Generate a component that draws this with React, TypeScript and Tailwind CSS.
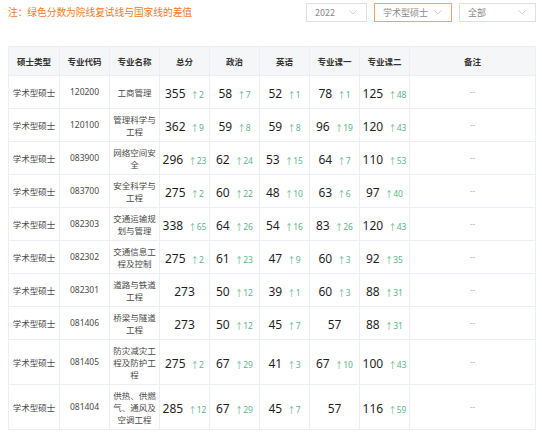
import React from 'react'

type Score = [number, number?]

type Row = {
  code: string
  name: string
  scores: Score[]
}

const ROWS: Row[] = [
  { code: '120200', name: '工商管理', scores: [[355, 2], [58, 7], [52, 1], [78, 1], [125, 48]] },
  { code: '120100', name: '管理科学与工程', scores: [[362, 9], [59, 8], [59, 8], [96, 19], [120, 43]] },
  { code: '083900', name: '网络空间安全', scores: [[296, 23], [62, 24], [53, 15], [64, 7], [110, 53]] },
  { code: '083700', name: '安全科学与工程', scores: [[275, 2], [60, 22], [48, 10], [63, 6], [97, 40]] },
  { code: '082303', name: '交通运输规划与管理', scores: [[338, 65], [64, 26], [54, 16], [83, 26], [120, 43]] },
  { code: '082302', name: '交通信息工程及控制', scores: [[275, 2], [61, 23], [47, 9], [60, 3], [92, 35]] },
  { code: '082301', name: '道路与铁道工程', scores: [[273], [50, 12], [39, 1], [60, 3], [88, 31]] },
  { code: '081406', name: '桥梁与隧道工程', scores: [[273], [50, 12], [45, 7], [57], [88, 31]] },
  { code: '081405', name: '防灾减灾工程及防护工程', scores: [[275, 2], [67, 29], [41, 3], [67, 10], [100, 43]] },
  { code: '081404', name: '供热、供燃气、通风及空调工程', scores: [[285, 12], [67, 29], [45, 7], [57], [116, 59]] },
]

const HEADERS = ['硕士类型', '专业代码', '专业名称', '总分', '政治', '英语', '专业课一', '专业课二', '备注']

const CJK = { fontFamily: '"Noto Sans CJK SC", "Noto Sans", sans-serif' }
const NUM = { fontFamily: '"Noto Sans", "Noto Sans CJK SC", sans-serif' }

function Chevron() {
  return (
    <svg width="8" height="5" viewBox="0 0 8 5" fill="none">
      <path d="M0.5 0.5 L4 4 L7.5 0.5" stroke="#c0c4cc" strokeWidth="0.8" />
    </svg>
  )
}

function Select({ label, width, active }: { label: string; width: string; active?: boolean }) {
  return (
    <div
      className={`h-[19px] ${width} flex items-center justify-between pl-[8px] pr-[9px] bg-white border ${active ? 'border-[#f0a466]' : 'border-[#dcdfe6]'}`}
    >
      <span className="text-[9px] text-[#8a8a8a]" style={CJK}>{label}</span>
      <Chevron />
    </div>
  )
}

function ScoreCell({ s }: { s: Score }) {
  const [v, d] = s
  return (
    <td className="border border-[#ebeef5] text-center whitespace-nowrap" style={NUM}>
      <span className="text-[12px] text-[#1f1f1f]">{v}</span>
      {d !== undefined && (
        <span className="ml-[5px] text-[8.5px] text-[#5cb58c]">↑{d}</span>
      )}
    </td>
  )
}

export default function App() {
  return (
    <div className="w-[542px] h-[433px] bg-white pl-2 pr-[6px] overflow-hidden">
      <div className="pt-[3px] flex items-center justify-between">
        <div className="text-[9.7px] text-[#f07a1e]" style={CJK}>注：绿色分数为院线复试线与国家线的差值</div>
        <div className="flex gap-[7px]">
          <Select label="2022" width="w-[61px]" />
          <Select label="学术型硕士" width="w-[78px]" active />
          <Select label="全部" width="w-[77px]" />
        </div>
      </div>

      <table className="mt-[24px] w-full table-fixed border-collapse">
        <colgroup>
          <col className="w-[51px]" />
          <col className="w-[50px]" />
          <col className="w-[50px]" />
          <col className="w-[50px]" />
          <col className="w-[50px]" />
          <col className="w-[50px]" />
          <col className="w-[50px]" />
          <col className="w-[50px]" />
          <col />
        </colgroup>
        <thead>
          <tr className="h-[29px] bg-[#f5f6f7]">
            {HEADERS.map(h => (
              <th key={h} className="border border-[#ebeef5] text-[8.5px] font-bold text-[#333]" style={CJK}>{h}</th>
            ))}
          </tr>
        </thead>
        <tbody>
          {ROWS.map(r => (
            <tr key={r.code} className="h-[33px]">
              <td className="border border-[#ebeef5] text-center text-[8.5px] text-[#4a4a4a]" style={CJK}>学术型硕士</td>
              <td className="border border-[#ebeef5] text-center text-[8.5px] text-[#4a4a4a]" style={NUM}>{r.code}</td>
              <td className="border border-[#ebeef5] text-center text-[8.5px] leading-[12px] text-[#4a4a4a] px-[3px] py-[4px]" style={CJK}>{r.name}</td>
              {r.scores.map((s, i) => <ScoreCell key={i} s={s} />)}
              <td className="border border-[#ebeef5] text-center text-[8px] text-[#b5b5b5]" style={NUM}>--</td>
            </tr>
          ))}
        </tbody>
      </table>
    </div>
  )
}
